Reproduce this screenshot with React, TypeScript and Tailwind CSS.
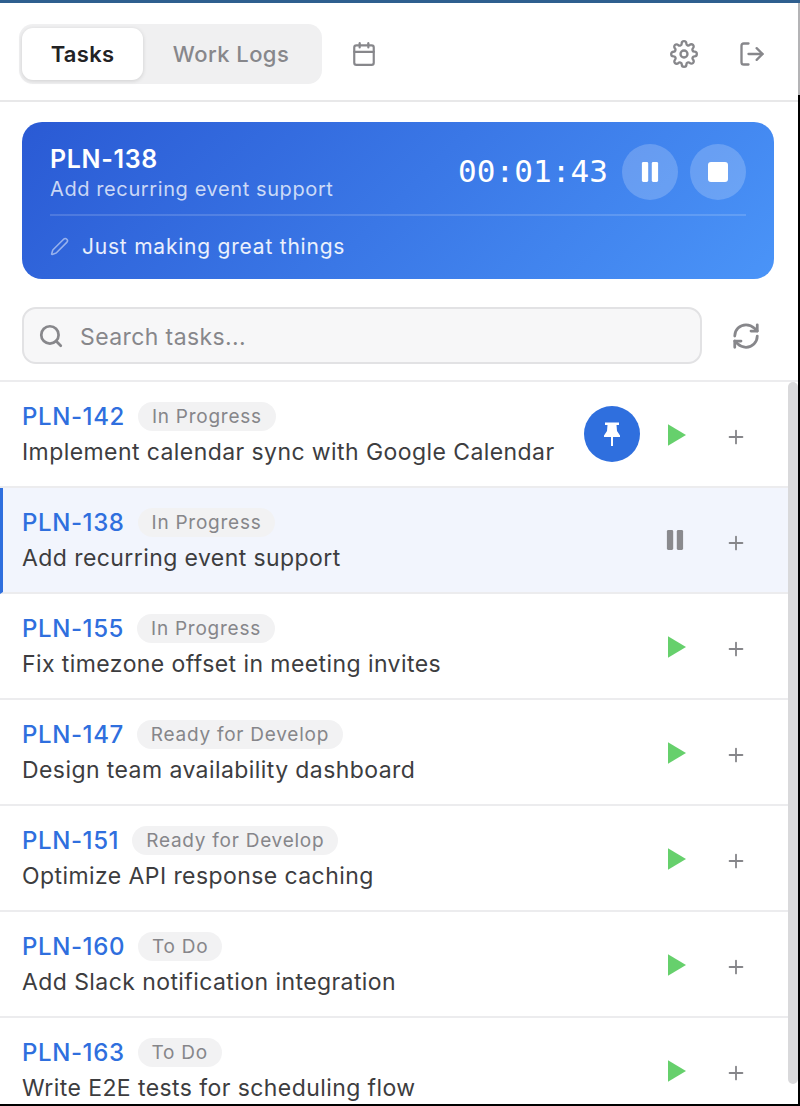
import React from "react";
import { Calendar, LogOut, Pen, Search, RefreshCw, Plus } from "lucide-react";
import { FiSettings } from "react-icons/fi";

type Task = { id: string; status: string; title: string; active?: boolean; pinned?: boolean };

const tasks: Task[] = [
  { id: "PLN-142", status: "In Progress", title: "Implement calendar sync with Google Calendar", pinned: true },
  { id: "PLN-138", status: "In Progress", title: "Add recurring event support", active: true },
  { id: "PLN-155", status: "In Progress", title: "Fix timezone offset in meeting invites" },
  { id: "PLN-147", status: "Ready for Develop", title: "Design team availability dashboard" },
  { id: "PLN-151", status: "Ready for Develop", title: "Optimize API response caching" },
  { id: "PLN-160", status: "To Do", title: "Add Slack notification integration" },
  { id: "PLN-163", status: "To Do", title: "Write E2E tests for scheduling flow" },
];

function PauseGlyph({ className }: { className: string }) {
  return (
    <svg viewBox="0 0 20 24" className={className} fill="currentColor">
      <rect x="1" y="1" width="7" height="22" rx="1.5" />
      <rect x="12" y="1" width="7" height="22" rx="1.5" />
    </svg>
  );
}

function PinGlyph() {
  return (
    <svg viewBox="0 0 16 24" className="h-[24px] w-[16px]" fill="white">
      <path d="M1 0.5 H15 V3 H12.5 L13 9 L16 13.5 V15 H9 V24 H7 V15 H0 V13.5 L3 9 L3.5 3 H1 Z" />
    </svg>
  );
}

function TaskRow({ task }: { task: Task }) {
  return (
    <div
      className={`flex h-[106px] shrink-0 items-center border-b-2 border-[#ececee] pl-[22px] ${
        task.active ? "border-l-[3px] border-l-[#2f6fde] bg-[#f2f5fd] !pl-[19px]" : "bg-white"
      }`}
    >
      <div className="min-w-0 flex-1 pt-[2px]">
        <div className="flex h-[28px] items-center gap-[13px]">
          <span className="text-[24px] font-medium tracking-[0.6px] text-[#2f6fde]">{task.id}</span>
          <span className="flex h-[29px] items-center rounded-full bg-[#f2f2f3] px-[14px] pt-[2px] text-[19px] tracking-[0.75px] text-[#86868a]">
            {task.status}
          </span>
        </div>
        <div className="mt-[5px] whitespace-nowrap text-[23px] leading-[32px] tracking-[0.42px] text-[#3d3d3f]">
          {task.title}
        </div>
      </div>
      {task.pinned && (
        <div className="mr-[24px] flex h-[56px] w-[56px] items-center justify-center rounded-full bg-[#2f6fde]">
          <PinGlyph />
        </div>
      )}
      <div className="flex w-[24px] justify-center">
        {task.active ? (
          <PauseGlyph className="mr-[2px] h-[22px] w-[18px] text-[#8a8a8e]" />
        ) : (
          <svg viewBox="0 0 20 24" className="ml-[1px] mt-[1px] h-[22px] w-[18px]">
            <path d="M0 0 L20 12 L0 24 Z" fill="#66d06c" />
          </svg>
        )}
      </div>
      <div className="ml-[36px] mr-[40px] mt-[5px] flex w-[24px] justify-center">
        <Plus size={22} strokeWidth={2} className="text-[#86868a]" />
      </div>
    </div>
  );
}

export default function App() {
  return (
    <div className="relative flex h-[1106px] w-[800px] flex-col overflow-hidden bg-white font-['Inter',sans-serif]">
      <div className="h-[3px] shrink-0 bg-[#2f5f8f]" />
      <header className="flex h-[99px] shrink-0 items-center border-b-2 border-[#e8e8e9] pl-[19px] pt-[5px]">
        <div className="flex h-[60px] w-[303px] items-center rounded-[14px] bg-[#f0f0f1] py-[4px] pl-[3px] pr-[4px]">
          <div className="flex h-[52px] w-[121px] items-center justify-center rounded-[11px] bg-white text-[22px] font-semibold tracking-[0.3px] text-[#222224] shadow-[0_1px_4px_rgba(0,0,0,0.14)]">
            Tasks
          </div>
          <div className="flex-1 pl-[1px] text-center text-[22px] font-medium tracking-[0.45px] text-[#87878b]">
            Work Logs
          </div>
        </div>
        <Calendar size={26} strokeWidth={2} className="ml-[29px] text-[#87878b]" />
        <FiSettings size={28} strokeWidth={2} className="ml-auto text-[#87878b]" />
        <LogOut size={28} strokeWidth={2} className="ml-[40px] mr-[34px] text-[#87878b]" />
      </header>

      <div className="ml-[22px] mr-[26px] mt-[20px] shrink-0 rounded-[20px] bg-[linear-gradient(135deg,#2a5ad4,#4a94f8)] px-[28px]">
        <div className="flex h-[92px] items-center justify-between pt-[8px]">
          <div className="pt-[3px]">
            <div className="text-[25px] font-semibold leading-[30px] tracking-[0.65px] text-white">PLN-138</div>
            <div className="text-[20px] leading-[30px] tracking-[0.6px] text-white/75">Add recurring event support</div>
          </div>
          <div className="flex items-center">
            <span className="mr-[14px] pb-[2px] font-['DejaVu_Sans_Mono',monospace] text-[31px] leading-[40px] tracking-[0.1px] text-white">
              00:01:43
            </span>
            <div className="mr-[12px] flex h-[56px] w-[56px] items-center justify-center rounded-full bg-white/20">
              <PauseGlyph className="h-[22px] w-[18px] text-white" />
            </div>
            <div className="flex h-[56px] w-[56px] items-center justify-center rounded-full bg-white/20">
              <div className="h-[20px] w-[20px] rounded-[3px] bg-white" />
            </div>
          </div>
        </div>
        <div className="h-[2px] bg-white/15" />
        <div className="flex h-[63px] items-center pb-[2px]">
          <Pen size={19} strokeWidth={2} className="text-white/50" />
          <span className="ml-[13px] text-[21px] tracking-[0.78px] text-white/90">Just making great things</span>
        </div>
      </div>

      <div className="mt-[28px] flex h-[57px] shrink-0 items-center pl-[22px]">
        <div className="flex h-[57px] w-[680px] items-center rounded-[14px] border-2 border-[#e2e2e4] bg-[#f7f7f8] pl-[14px]">
          <Search size={26} strokeWidth={2.5} className="text-[#87878b]" />
          <span className="ml-[16px] pt-[3px] text-[23px] tracking-[0.4px] text-[#87878b]">Search tasks...</span>
        </div>
        <RefreshCw size={30} strokeWidth={2.2} className="ml-[29px] text-[#87878b]" />
      </div>

      <div className="relative mt-[16px] flex-1 overflow-hidden border-t-2 border-[#ececee]">
        <div className="w-[788px]">
          {tasks.map((t) => (
            <TaskRow key={t.id} task={t} />
          ))}
        </div>
        <div className="absolute right-[2px] top-0 h-[702px] w-[10px] rounded-full bg-[#d9d9db]" />
      </div>
      <div className="absolute bottom-0 right-0 top-[3px] flex w-[2px] flex-col">
        <div className="h-[92px] bg-[#b4b4b6]" />
        <div className="flex-1 bg-black" />
      </div>
      <div className="absolute inset-x-0 bottom-0 h-[2px] bg-black" />
    </div>
  );
}
